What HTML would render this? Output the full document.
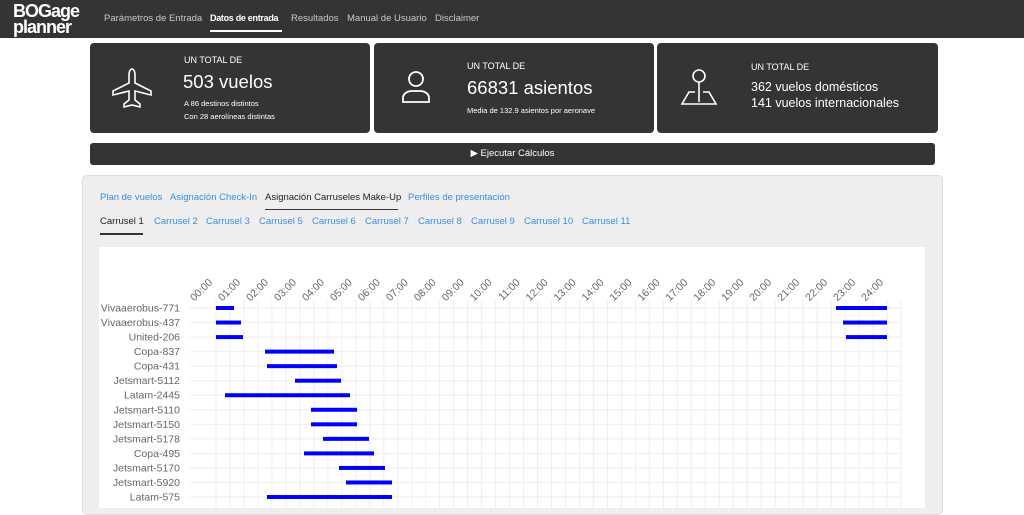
<!DOCTYPE html>
<html><head><meta charset="utf-8"><style>
*{margin:0;padding:0;box-sizing:border-box}
body{width:1024px;height:508px;overflow:hidden;background:#fff;font-family:"Liberation Sans",sans-serif;position:relative}
.nav{position:absolute;left:0;top:0;width:1024px;height:38px;background:#343434}
.logo{position:absolute;left:13px;top:3px;color:#fff;font-weight:bold;font-size:18px;line-height:16px;letter-spacing:-1px}
.nl{position:absolute;top:13px;font-size:9.5px;color:#c8c8c8;white-space:nowrap}
.card{position:absolute;top:43px;height:90px;background:#333436;border-radius:4px;color:#fff}
.small{position:absolute;font-size:9px}
.big{position:absolute;font-size:18.5px}
.sub{position:absolute;font-size:7.5px;line-height:13px}
.btn{position:absolute;left:90px;top:143px;width:845px;height:22px;background:#333436;border-radius:3px;color:#fff;font-size:9.5px;text-align:center;line-height:22px}
.panel{position:absolute;left:82px;top:175px;width:861px;height:340px;background:#eeeeee;border:1px solid #ddd;border-radius:5px}
.t{position:absolute;font-size:9.5px;color:#3d8fd6;white-space:nowrap}
.on{color:#222}
</style></head><body>
<div class="nav">
<div class="logo">BOGage<br>planner</div>
<div class="nl" style="left:104px">Parámetros de Entrada</div>
<div class="nl" style="left:210px;color:#fff;font-weight:bold;font-size:9px;letter-spacing:-0.3px">Datos de entrada</div>
<div style="position:absolute;left:210px;top:30px;width:72px;height:2px;background:#fff"></div>
<div class="nl" style="left:291px">Resultados</div>
<div class="nl" style="left:347px">Manual de Usuario</div>
<div class="nl" style="left:435px">Disclaimer</div>
</div>

<div class="card" style="left:90px;width:280px">
<svg style="position:absolute;left:20px;top:24px" width="44" height="42" viewBox="0 0 44 42" fill="none" stroke="#fff" stroke-width="1.6"><path d="M22 2c2 0 3 3 3 6v8l16 8v4l-16-4v9l5 4v3l-8-2-8 2v-3l5-4v-9L3 28v-4l16-8V8c0-3 1-6 3-6z"/></svg>
<div class="small" style="left:94px;top:12px">UN TOTAL DE</div>
<div class="big" style="left:93px;top:28px">503 vuelos</div>
<div class="sub" style="left:94px;top:54px">A 86 destinos distintos<br>Con 28 aerolíneas distintas</div>
</div>
<div class="card" style="left:374px;width:280px">
<svg style="position:absolute;left:26px;top:27px" width="32" height="34" viewBox="0 0 32 34" fill="none" stroke="#fff" stroke-width="1.8"><circle cx="16" cy="9" r="7"/><path d="M3 32v-4c0-4 4-7 9-7h8c5 0 9 3 9 7v4z"/></svg>
<div class="small" style="left:93px;top:18px">UN TOTAL DE</div>
<div class="big" style="left:93px;top:34px">66831 asientos</div>
<div class="sub" style="left:93px;top:61px">Media de 132.9 asientos por aeronave</div>
</div>
<div class="card" style="left:657px;width:281px">
<svg style="position:absolute;left:22px;top:25px" width="40" height="42" viewBox="0 0 40 42" fill="none" stroke="#fff" stroke-width="1.6"><circle cx="20" cy="8" r="6"/><path d="M20 14v20M16 24H10L3 36h34l-7-12h-6"/></svg>
<div class="small" style="left:94px;top:19px">UN TOTAL DE</div>
<div style="position:absolute;left:94px;top:36px;font-size:12.5px;line-height:16px">362 vuelos domésticos<br>141 vuelos internacionales</div>
</div>
<div class="btn">▶ Ejecutar Cálculos</div>

<div class="panel">
<div class="t" style="left:17px;top:16px">Plan de vuelos</div>
<div class="t" style="left:87px;top:16px">Asignación Check-In</div>
<div class="t on" style="left:182px;top:16px">Asignación Carruseles Make-Up</div>
<div style="position:absolute;left:182px;top:33px;width:133px;height:1px;background:#333"></div>
<div class="t" style="left:325px;top:16px">Perfiles de presentación</div>
<div class="t on" style="left:17px;top:40px">Carrusel 1</div>
<div style="position:absolute;left:17px;top:57px;width:43px;height:2px;background:#333"></div>
<div class="t" style="left:71px;top:40px">Carrusel 2</div>
<div class="t" style="left:123px;top:40px">Carrusel 3</div>
<div class="t" style="left:176px;top:40px">Carrusel 5</div>
<div class="t" style="left:229px;top:40px">Carrusel 6</div>
<div class="t" style="left:282px;top:40px">Carrusel 7</div>
<div class="t" style="left:335px;top:40px">Carrusel 8</div>
<div class="t" style="left:388px;top:40px">Carrusel 9</div>
<div class="t" style="left:441px;top:40px">Carrusel 10</div>
<div class="t" style="left:499px;top:40px">Carrusel 11</div>
</div>
<svg style="position:absolute;left:0;top:0" width="1024" height="508">
<rect x="99" y="247" width="826" height="270" fill="#fff"/>
<g stroke="#eee" stroke-width="1" id="grid"></g>
<g id="g" font-family="Liberation Sans,sans-serif" font-size="10" fill="#666"></g>
</svg>
<script>
var g=document.getElementById('g'),gr=document.getElementById('grid');
var ns='http://www.w3.org/2000/svg';
function el(t,a,p,tx){var e=document.createElementNS(ns,t);for(var k in a)e.setAttribute(k,a[k]);if(tx)e.textContent=tx;p.appendChild(e);return e;}
var x0=216,h=27.96;
for(var i=0;i<=24;i++){var x=x0+i*h;el('line',{x1:x,y1:300,x2:x,y2:508},gr);
el('line',{x1:x+h/2,y1:300,x2:x+h/2,y2:508},gr);
var s=(i<10?'0':'')+i+':00';var lx=x-3,ly=283;el('text',{x:lx,y:ly,'text-anchor':'end','font-size':'10.5',transform:'rotate(-45 '+lx+' '+ly+')'},g,s);}
var rows=[['Vivaaerobus-771',[[216,234],[836,887]]],['Vivaaerobus-437',[[216,241],[843,887]]],['United-206',[[216,243],[846,887]]],['Copa-837',[[265,334]]],['Copa-431',[[267,337]]],['Jetsmart-5112',[[295,341]]],['Latam-2445',[[225,350]]],['Jetsmart-5110',[[311,357]]],['Jetsmart-5150',[[311,357]]],['Jetsmart-5178',[[323,369]]],['Copa-495',[[304,374]]],['Jetsmart-5170',[[339,385]]],['Jetsmart-5920',[[346,392]]],['Latam-575',[[267,392]]]];
rows.forEach(function(r,i){var y=308+i*14.54;
el('line',{x1:190,y1:y,x2:900,y2:y},gr);
el('text',{x:180,y:y+3.5,'text-anchor':'end','font-size':'10.5'},g,r[0]);
r[1].forEach(function(b){el('rect',{x:b[0],y:y-2,width:b[1]-b[0],height:4,fill:'#0000ff'},g);});});
</script>
</body></html>
